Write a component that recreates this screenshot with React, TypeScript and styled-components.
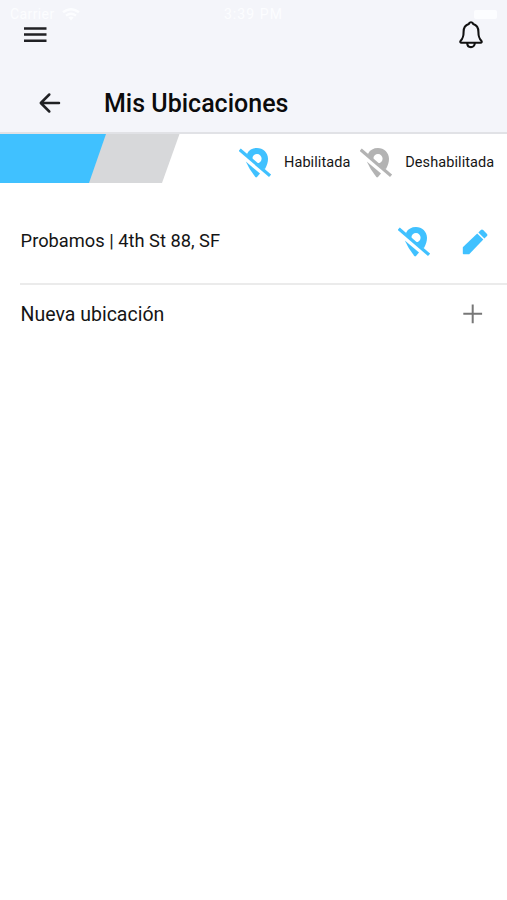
import React from 'react';
import styled, { createGlobalStyle } from 'styled-components';

const BLUE = '#40c1ff';

const GlobalStyle = createGlobalStyle`
  * { box-sizing: border-box; }
  body { margin: 0; background: #fff; font-family: Roboto, sans-serif; color: #151515; }
  svg { display: block; flex: none; }
`;

const Screen = styled.div`
  width: 100%;
  min-height: 900px;
  background: #fff;
  overflow: hidden;
`;

const Header = styled.header`
  height: 134px;
  background: #f4f5fa;
  border-bottom: 2px solid #e1e2e6;
`;

const StatusBar = styled.div`
  height: 20px;
  padding: 6px 10px 0;
  display: grid;
  grid-template-columns: 1fr auto 1fr;
  align-items: center;
  color: #fcfdff;
  font-size: 14px;
  line-height: 16px;
`;

const Carrier = styled.div`
  display: flex;
  align-items: center;
  gap: 7px;
  letter-spacing: 0.4px;
`;

const Clock = styled.span`
  letter-spacing: 1.1px;
`;

const Battery = styled.div`
  justify-self: end;
  width: 23px;
  height: 9px;
  border-radius: 2px;
  background: #fcfdff;
`;

const NavBar = styled.nav`
  height: 40px;
  padding: 0 22px 0 20px;
  display: flex;
  align-items: flex-start;
  justify-content: space-between;
`;

const IconButton = styled.button`
  padding: 0;
  border: 0;
  background: none;
  color: inherit;
  display: flex;
`;

const TitleBar = styled.div`
  height: 60px;
  margin-top: 13px;
  padding-left: 36px;
  display: flex;
  align-items: center;
`;

const Title = styled.h1`
  margin: 0 0 0 40px;
  padding-top: 2px;
  font-size: 25px;
  line-height: 30px;
  font-weight: 500;
  letter-spacing: 0;
  color: #0b0b0c;
`;

const Legend = styled.section`
  height: 49px;
  display: flex;
  align-items: center;
`;

const LegendItem = styled.div<{ $start: number }>`
  margin-left: ${p => p.$start}px;
  padding-top: 8px;
  display: flex;
  align-items: center;
  gap: 13px;
  font-size: 14.5px;
  line-height: 18px;
  letter-spacing: 0.08px;
  white-space: nowrap;
`;

const List = styled.main`
  margin-left: 20px;
`;

const Row = styled.div<{ $height: number; $divided?: boolean }>`
  height: ${p => p.$height}px;
  padding-right: ${p => (p.$divided ? 19 : 23)}px;
  padding-top: ${p => (p.$divided ? 16 : 0)}px;
  display: flex;
  align-items: center;
  justify-content: space-between;
  border-bottom: ${p => (p.$divided ? '2px solid #ebebeb' : '0')};
`;

const Label = styled.span<{ $size: number; $drop: number }>`
  padding: ${p => p.$drop}px 0 0 0.6px;
  font-size: ${p => p.$size}px;
  line-height: 24px;
`;

const Actions = styled.div`
  display: flex;
  align-items: center;
  gap: 32px;
  padding-top: 1px;
`;

const PinOff = ({ color }: { color: string }) => (
  <svg width="32" height="30" viewBox="0 0 32 30">
    <path
      fill={color}
      fillRule="evenodd"
      d="M8.2 5.4C10 2 13.7 0 17.9 0C24 0 29 4.7 29 10.7C29 14 28 17 26 21L22 20L8.2 8ZM13.4 10.6C13.4 13 15.4 15.2 17.9 15.2A4.6 4.6 0 1 0 13.4 10.6Z"
    />
    <path fill={color} d="M6.8 13.4L21 25.6L18 29Q17.2 29.8 16.3 29Q10.3 21.5 6.8 13.4Z" />
    <path stroke={color} strokeWidth="3.3" d="M.7 1.7L31.1 27.8" />
  </svg>
);

const Menu = () => (
  <svg width="30" height="28" viewBox="0 0 30 28">
    <path d="M4 8.5H26.5M4 14.6H26.5M4 20.7H26.5" stroke="#202124" strokeWidth="2.5" />
  </svg>
);

const Bell = () => (
  <svg width="28" height="30" viewBox="0 0 28 30" fill="none" stroke="#111" strokeWidth="2.1" strokeLinejoin="round">
    <path d="M14 2.3C12.9 2.3 12 3 11.8 4C8.2 5.1 6.6 8 6.6 11.7C6.6 17 5.8 18.3 3.6 20.9C2.9 21.8 3.2 22.8 4.5 22.8H23.5C24.8 22.8 25.1 21.8 24.4 20.9C22.2 18.3 21.4 17 21.4 11.7C21.4 8 19.8 5.1 16.2 4C16 3 15.1 2.3 14 2.3Z" />
    <path d="M10.2 23C10.2 28.5 17.8 28.5 17.8 23" />
  </svg>
);

const Back = () => (
  <svg width="28" height="28" viewBox="0 0 28 28" fill="none" stroke="#202124" strokeWidth="2.5" strokeLinecap="round" strokeLinejoin="round">
    <path d="M23 14H5M13.3 5.5L4.8 14L13.3 22.5" />
  </svg>
);

const Wifi = () => (
  <svg width="18" height="13" viewBox="0 0 18 13" fill="none" stroke="#fcfdff" strokeWidth="2.4">
    <path d="M1 4.2Q9-1.8 17 4.2M4 7.6Q9 3.8 14 7.6" />
    <path d="M6.4 9.5Q9 7.6 11.6 9.5L9 12.6Z" fill="#fcfdff" stroke="none" />
  </svg>
);

const Pencil = () => (
  <svg width="26" height="26" viewBox="0 0 26 26" fill={BLUE}>
    <path d="M15.2 4.5L21.3 10.6L7.2 25.2H1.5Q.8 25.2.8 24.5V18.3Z" />
    <path d="M16.4 3.4L18.8.9Q20 0 21.2 1L25 4.9Q26 6 25 7.1L22.4 9.6Z" />
  </svg>
);

const Plus = () => (
  <svg width="22" height="22" viewBox="0 0 22 22">
    <path d="M10.7 1.5V20.2M1.3 10.8H20.1" stroke="#777" strokeWidth="2" />
  </svg>
);

const LegendStripes = () => (
  <svg width="181" height="49" viewBox="0 0 181 49">
    <path fill="#d7d8da" d="M100 0H179.5L162 49H80Z" />
    <path fill={BLUE} d="M0 0H106L89 49H0Z" />
  </svg>
);

export default function App() {
  return (
    <Screen>
      <GlobalStyle />
      <Header>
        <StatusBar>
          <Carrier>Carrier <Wifi /></Carrier>
          <Clock>3:39 PM</Clock>
          <Battery />
        </StatusBar>
        <NavBar>
          <IconButton aria-label="Menú"><Menu /></IconButton>
          <IconButton aria-label="Notificaciones"><Bell /></IconButton>
        </NavBar>
        <TitleBar>
          <IconButton aria-label="Volver"><Back /></IconButton>
          <Title>Mis Ubicaciones</Title>
        </TitleBar>
      </Header>
      <Legend>
        <LegendStripes />
        <LegendItem $start={58}><PinOff color={BLUE} />Habilitada</LegendItem>
        <LegendItem $start={9.8}><PinOff color="#b3b3b3" />Deshabilitada</LegendItem>
      </Legend>
      <List>
        <Row $height={102} $divided>
          <Label $size={18.3} $drop={0}>Probamos | 4th St 88, SF</Label>
          <Actions>
            <IconButton aria-label="Deshabilitar"><PinOff color={BLUE} /></IconButton>
            <IconButton aria-label="Editar"><Pencil /></IconButton>
          </Actions>
        </Row>
        <Row $height={58}>
          <Label $size={19.5} $drop={2}>Nueva ubicación</Label>
          <IconButton aria-label="Agregar"><Plus /></IconButton>
        </Row>
      </List>
    </Screen>
  );
}
